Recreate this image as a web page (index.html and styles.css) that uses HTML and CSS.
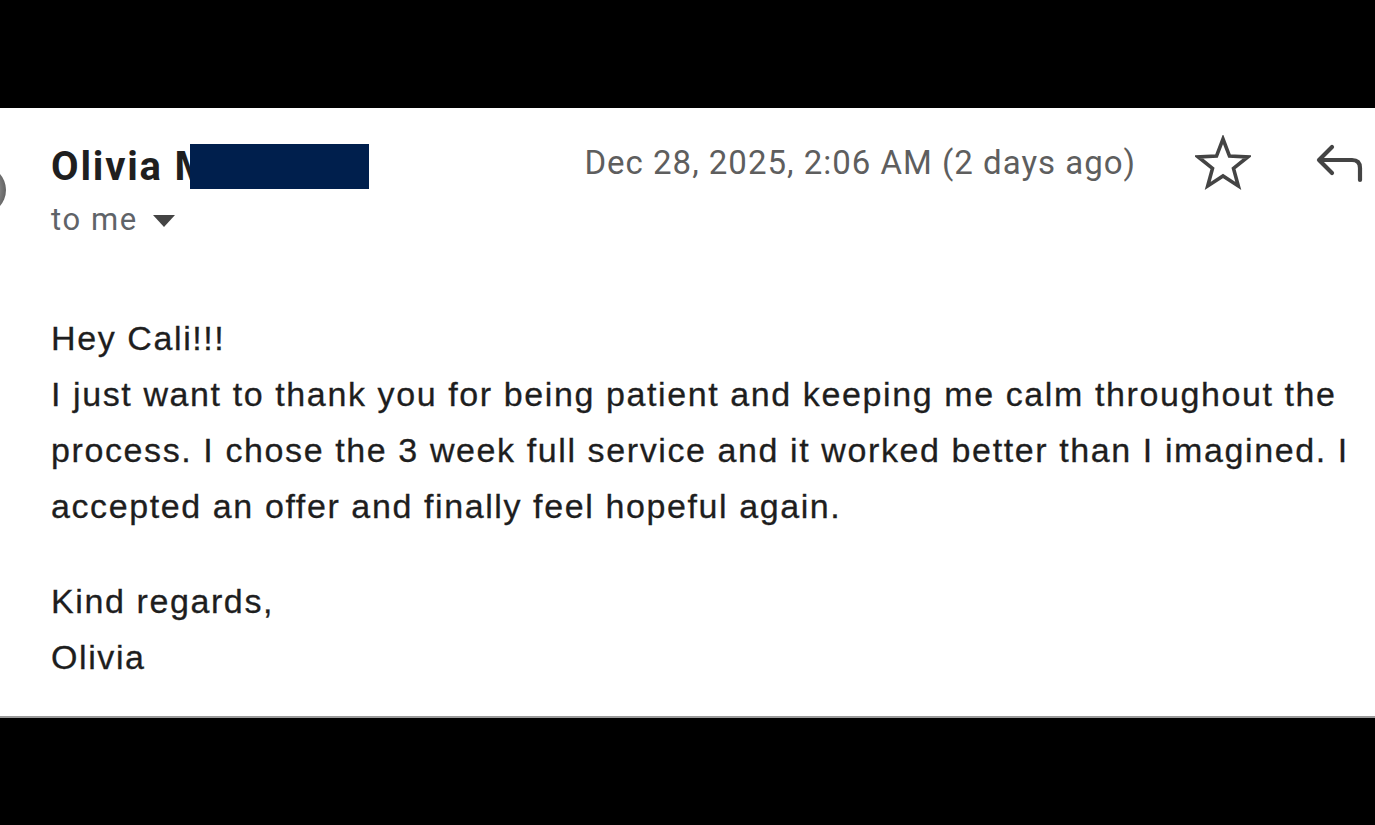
FILE: index.html
```html
<!DOCTYPE html>
<html lang="en">
<head>
<meta charset="utf-8">
<title>Email</title>
<link rel="stylesheet" href="styles.css">
</head>
<body>
<div class="bar-top"></div>
<main class="mail">
  <div class="avatar-edge"></div>
  <header class="head">
    <div class="who">
      <div class="sender"><span class="name">Olivia M</span><span class="redact"></span></div>
      <div class="to">to me <svg class="caret" width="22" height="12" viewBox="0 0 22 12"><path d="M0 0 L22 0 L11 12 Z" fill="#444"/></svg></div>
    </div>
    <div class="date">Dec 28, 2025, 2:06 AM (2 days ago)</div>
    <svg class="icon star" width="56" height="56" viewBox="0 0 56 56"><path d="M28 4 L34.5 21.1 L52.7 22 L38.5 33.4 L43.3 51 L28 41 L12.7 51 L17.5 33.4 L3.3 22 L21.5 21.1 Z" fill="none" stroke="#444" stroke-width="3.6" stroke-linejoin="miter"/></svg>
    <svg class="icon reply" width="48" height="40" viewBox="0 0 48 40"><path d="M17 4 L4 17 L17 30 M4 17 H37 Q45 17 45 25 V37" fill="none" stroke="#444" stroke-width="4.2" stroke-linecap="round" stroke-linejoin="round"/></svg>
  </header>
  <section class="body">
    <p class="line">Hey Cali!!!</p>
    <p class="para">I just want to thank you for being patient and keeping me calm throughout the process. I chose the 3 week full service and it worked better than I imagined. I accepted an offer and finally feel hopeful again.</p>
    <p class="sign">Kind regards,<br>Olivia</p>
  </section>
</main>
<div class="bar-bottom"></div>
</body>
</html>
```

FILE: styles.css
```css
html, body {
  margin: 0;
  padding: 0;
  background: #000;
}
.bar-top {
  height: 108px;
  background: #000;
}
.bar-bottom {
  height: 109px;
  background: #000;
  border-top: 2px solid #9a9a9a;
  box-sizing: border-box;
}
.mail {
  position: relative;
  background: #fff;
  height: 608px;
  padding-left: 51px;
  overflow: hidden;
  box-sizing: border-box;
}
.avatar-edge {
  position: absolute;
  left: -42px;
  top: 58px;
  width: 48px;
  height: 48px;
  border-radius: 50%;
  background: radial-gradient(circle at 30% 50%, #ccc 0 40%, #777 70%, #444 100%);
}
.head {
  display: flex;
  align-items: flex-start;
  padding-top: 36px;
  padding-right: 12px;
}
.who {
  flex: 1;
}
.sender {
  position: relative;
  height: 45px;
  line-height: 45px;
}
.name {
  font-family: Roboto, "Liberation Sans", sans-serif;
  font-weight: 700;
  font-size: 40px;
  letter-spacing: 1.8px;
  color: #1f1f1f;
  white-space: nowrap;
}
.redact {
  position: absolute;
  left: 139px;
  top: 0;
  width: 179px;
  height: 45px;
  background: #001f4d;
}
.to {
  font-family: Roboto, "Liberation Sans", sans-serif;
  font-size: 31px;
  line-height: 36px;
  letter-spacing: 1.6px;
  color: #5f6368;
  margin-top: 13px;
  display: flex;
  align-items: center;
  gap: 15px;
}
.caret {
  margin-top: 2px;
}
.date {
  font-family: Roboto, "Liberation Sans", sans-serif;
  font-size: 33px;
  line-height: 45px;
  letter-spacing: 1px;
  color: #5e5e5e;
  margin-top: -4px;
  margin-right: 59px;
  white-space: nowrap;
}
.icon {
  display: block;
  flex: none;
}
.star {
  margin-top: -9px;
  margin-right: 64px;
}
.reply {
  margin-top: -1px;
}
.body {
  font-family: "Liberation Sans", Arial, sans-serif;
  font-size: 34px;
  line-height: 56px;
  letter-spacing: 1.6px;
  color: #1e1e1e;
  -webkit-text-stroke: 0.3px #1e1e1e;
  margin-top: 72px;
}
.body p {
  margin: 0;
}
.body .sign {
  margin-top: 39px;
}
```
